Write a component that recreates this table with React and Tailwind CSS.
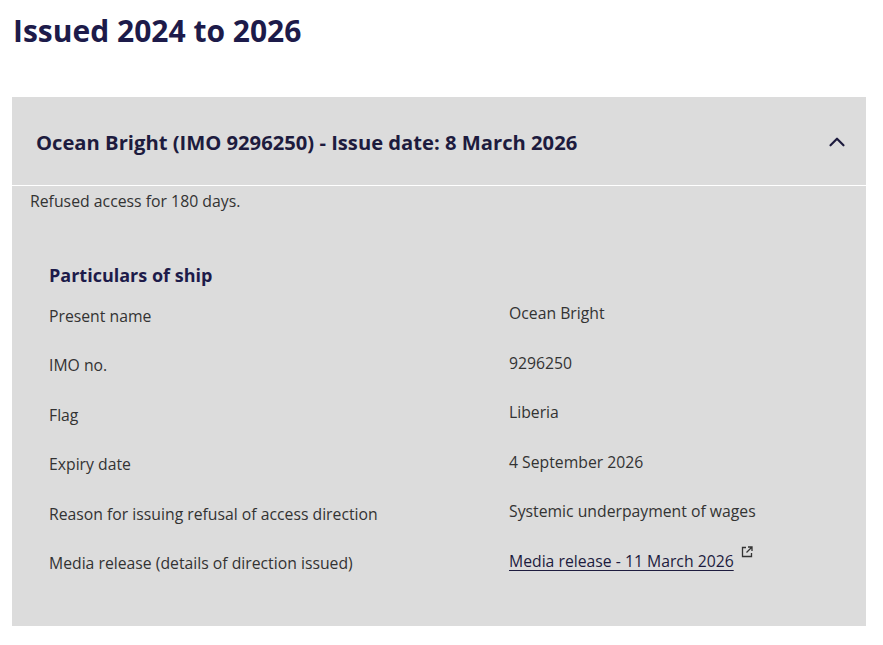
import { ChevronUp } from "lucide-react"

const rows = [
  ["Present name", "Ocean Bright"],
  ["IMO no.", "9296250"],
  ["Flag", "Liberia"],
  ["Expiry date", "4 September 2026"],
  ["Reason for issuing refusal of access direction", "Systemic underpayment of wages"],
]

function ExternalIcon() {
  return (
    <svg width="12" height="12" viewBox="0 0 12 12" fill="none" stroke="#333" strokeWidth="1.3" className="ml-[7px] mt-[-3px]">
      <path d="M5 1.5H1.5v9h9V7" />
      <path d="M7 1h4v4M11 1L5.5 6.5" />
    </svg>
  )
}

export default function App() {
  return (
    <div className="bg-white min-h-[645px] px-3 pt-[10px] text-[#333]" style={{ fontFamily: '"Open Sans", sans-serif' }}>
      <h1 className="text-[30px] font-bold leading-[42px] text-[#1d1b4a] pl-px">Issued 2024 to 2026</h1>

      <div className="mt-[45px] bg-[#dcdcdc] w-[854px]">
        <div className="flex items-center justify-between h-[89px] pt-[2px] pl-6 pr-4 border-b border-white">
          <h2 className="text-[20.2px] font-bold text-[#1d1b3e]">Ocean Bright (IMO 9296250) - Issue date: 8 March 2026</h2>
          <ChevronUp size={26} strokeWidth={2} color="#1d1b3e" />
        </div>

        <div className="px-[18px] pt-[3px] pb-[27px]">
          <p className="text-[15.8px] leading-[24px]">Refused access for 180 days.</p>

          <div className="mt-[49px] pl-[19px]">
            <h3 className="text-[18px] font-bold text-[#1d1b4a] leading-[26px]">Particulars of ship</h3>
            <div className="mt-[13px]">
              {rows.map(([label, value]) => (
                <div key={label} className="flex h-[49.6px] text-[15.75px] leading-[24px]">
                  <div className="w-[460px] pt-[2.5px]">{label}</div>
                  <div>{value}</div>
                </div>
              ))}
              <div className="flex h-[49.6px] text-[15.75px] leading-[24px]">
                <div className="w-[460px] pt-[2.5px]">Media release (details of direction issued)</div>
                <div className="flex items-start">
                  <a href="#" className="underline underline-offset-[3px] text-[#1d1b3e]">Media release - 11 March 2026</a>
                  <ExternalIcon />
                </div>
              </div>
            </div>
          </div>
        </div>
      </div>
    </div>
  )
}
